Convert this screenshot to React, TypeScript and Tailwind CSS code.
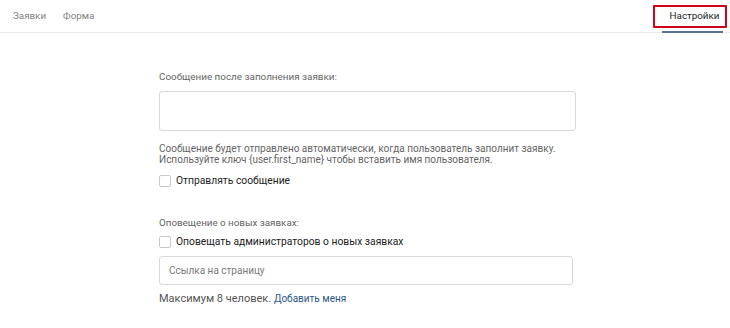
import React from "react";

function Checkbox({ label }: { label: string }) {
  return (
    <label className="flex items-center gap-[5px] h-[14px] text-[10.3px] leading-[14px] text-[#222]">
      <span className="w-[12px] h-[12px] rounded-[2px] border border-[#c5cad1] bg-white shrink-0" />
      <span>{label}</span>
    </label>
  );
}

export default function App() {
  return (
    <div className="w-[730px] h-[328px] bg-white overflow-hidden" style={{ fontFamily: "Roboto, 'Liberation Sans', sans-serif" }}>
      <div className="h-[33px] border-b border-[#e7e8ec] flex items-stretch justify-between">
        <div className="flex items-center gap-[17px] pl-[13px] text-[9.8px] text-[#828282]">
          <span>Заявки</span>
          <span>Форма</span>
        </div>
        <div className="flex items-end pr-[7px]">
          <div className="relative w-[61px] h-[20px] flex items-start justify-center text-[9.8px] leading-[14px] text-[#222] border-b-2 border-[#5b7391] -mb-px">
            <span className="ml-[4px] -mt-[4px]">Настройки</span>
            <span className="absolute left-[-9px] right-[-4px] top-[-8px] bottom-[3px] border-2 border-[#d0021b] rounded-[1px]" />
          </div>
        </div>
      </div>
      <div className="pl-[159px] w-[576px] pt-[37px]">
        <div className="text-[9.9px] text-[#656565] leading-[14px]">Сообщение после заполнения заявки:</div>
        <div className="mt-[7px] h-[40px] border border-[#d3d9de] rounded-[3px]" />
        <div className="mt-[12px] text-[10px] leading-[11px] text-[#656565]">
          <div>Сообщение будет отправлено автоматически, когда пользователь заполнит заявку.</div>
          <div>Используйте ключ {"{user.first_name}"} чтобы вставить имя пользователя.</div>
        </div>
        <div className="mt-[9px]">
          <Checkbox label="Отправлять сообщение" />
        </div>
        <div className="mt-[28px] text-[9.8px] text-[#656565] leading-[14px]">Оповещение о новых заявках:</div>
        <div className="mt-[5px]">
          <Checkbox label="Оповещать администраторов о новых заявках" />
        </div>
        <div className="mt-[7px] w-[414px] h-[29px] border border-[#d3d9de] rounded-[3px] flex items-center px-[9px] text-[10px] text-[#7a7a7a]">
          Ссылка на страницу
        </div>
        <div className="mt-[7px] text-[11px] leading-[14px] text-[#555]">
          Максимум 8 человек. <span className="text-[10px] text-[#2a5885]">Добавить меня</span>
        </div>
      </div>
    </div>
  );
}
